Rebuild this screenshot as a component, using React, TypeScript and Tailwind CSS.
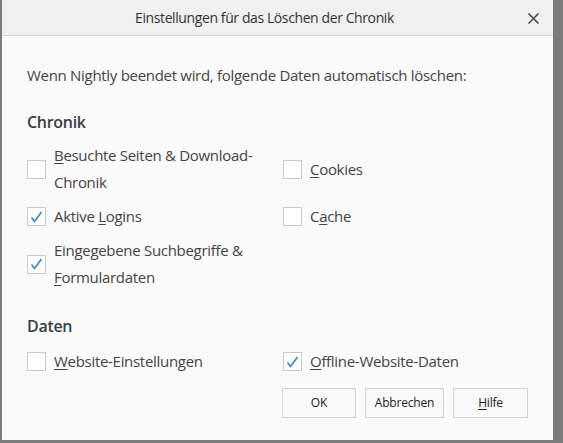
import type { ReactNode } from "react";

const font = { fontFamily: '"Open Sans", "Noto Sans", Arial, sans-serif' };

function Box({ checked }: { checked?: boolean }) {
  return (
    <span className="flex h-[19px] w-[19px] shrink-0 items-center justify-center border border-[#c9c9c9] bg-white">
      {checked && (
        <svg width="13" height="12" viewBox="0 0 13 12" fill="none">
          <path d="M1.5 6.5 L4.5 10.5 L11.5 1" stroke="#2b8cc4" strokeWidth="1.6" />
        </svg>
      )}
    </span>
  );
}

function Check({ checked, children }: { checked?: boolean; children: ReactNode }) {
  return (
    <div className="flex items-center gap-[8px]">
      <Box checked={checked} />
      <span className="leading-[27px]">{children}</span>
    </div>
  );
}

function U({ children }: { children: ReactNode }) {
  return <span className="underline underline-offset-2 decoration-1">{children}</span>;
}

export default function App() {
  return (
    <div className="flex h-[443px] w-[563px] bg-[#7b7b7b] pb-[3px] pl-[2px] pr-[10px]" style={font}>
      <div className="flex flex-1 flex-col bg-[#fafafa] text-[15px] tracking-[-0.3px] text-[#444]">
        <div className="relative flex h-[36px] shrink-0 items-center justify-center border-b border-[#d2d2d2] bg-[#f0f0f0] pr-[26px]">
          <span className="text-[14px] tracking-[-0.4px] text-[#333]">Einstellungen für das Löschen der Chronik</span>
          <svg className="absolute right-[14px] top-[13px]" width="11" height="11" viewBox="0 0 11 11">
            <path d="M0.5 0.5 L10.5 10.5 M10.5 0.5 L0.5 10.5" stroke="#444" strokeWidth="1.5" />
          </svg>
        </div>

        <div className="flex flex-1 flex-col pl-[25px] pr-[25px] pt-[29px]">
          <p className="leading-[20px]">Wenn Nightly beendet wird, folgende Daten automatisch löschen:</p>

          <h2 className="mt-[26px] text-[16px] font-semibold leading-[22px] text-[#383d44]">Chronik</h2>
          <div className="mt-[9px] grid grid-cols-[256px_1fr] gap-y-[7px]">
            <div className="flex items-center gap-[8px]">
              <Box />
              <span className="leading-[27px]">
                <U>B</U>esuchte Seiten &amp; Download-
                <br />
                Chronik
              </span>
            </div>
            <div className="flex items-center">
              <Check>
                <U>C</U>ookies
              </Check>
            </div>
            <Check checked>
              Aktive <U>L</U>ogins
            </Check>
            <Check>
              C<U>a</U>che
            </Check>
            <div className="flex items-center gap-[8px]">
              <Box checked />
              <span className="leading-[27px]">
                Eingegebene Suchbegriffe &amp;
                <br />
                <U>F</U>ormulardaten
              </span>
            </div>
            <div />
          </div>

          <h2 className="mt-[24px] text-[16px] font-semibold leading-[22px] text-[#383d44]">Daten</h2>
          <div className="mt-[11px] grid grid-cols-[256px_1fr]">
            <Check>
              <U>W</U>ebsite-Einstellungen
            </Check>
            <Check checked>
              <U>O</U>ffline-Website-Daten
            </Check>
          </div>

          <div className="mt-[13px] flex justify-end gap-[9px] text-[12px] tracking-[-0.2px] text-[#222]">
            <button className="h-[30px] w-[74px] border border-[#d3d3d3] bg-[#f9f9f9]">OK</button>
            <button className="h-[30px] w-[79px] border border-[#d3d3d3] bg-[#f9f9f9]">Abbrechen</button>
            <button className="h-[30px] w-[75px] border border-[#d3d3d3] bg-[#f9f9f9]">
              <U>H</U>ilfe
            </button>
          </div>
        </div>
      </div>
    </div>
  );
}
